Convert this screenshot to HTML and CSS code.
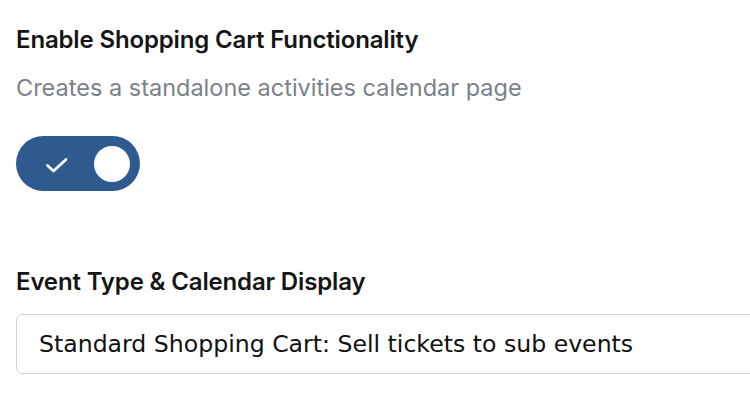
FILE: index.html
```html
<!DOCTYPE html>
<html>
<head>
<meta charset="utf-8">
<link rel="stylesheet" href="styles.css">
</head>
<body>
<div class="page">
  <section class="field">
    <h2 class="label">Enable Shopping Cart Functionality</h2>
    <p class="help">Creates a standalone activities calendar page</p>
    <div class="toggle" role="switch" aria-checked="true">
      <svg class="check" width="24" height="18" viewBox="0 0 24 18"><path d="M2.5 9.5 L8.5 15 L21 3.5" fill="none" stroke="#fff" stroke-width="2.8" stroke-linecap="round" stroke-linejoin="round"/></svg>
      <span class="knob"></span>
    </div>
  </section>
  <section class="field second">
    <h2 class="label">Event Type &amp; Calendar Display</h2>
    <div class="select">Standard Shopping Cart: Sell tickets to sub events</div>
  </section>
</div>
</body>
</html>
```
FILE: styles.css
```css
html, body { margin: 0; padding: 0; background: #fff; overflow: hidden; }
.page { padding: 25px 0 0 16px; font-family: Inter, "Noto Sans", sans-serif; }
.label { margin: 0; font-size: 24px; font-weight: 600; color: #151515; line-height: 29px; letter-spacing: -0.15px; }
.help { margin: 20px 0 0; font-size: 23.5px; color: #7b8188; line-height: 28px; }
.toggle { margin-top: 34px; width: 124px; height: 55px; border-radius: 28px; background: #2f5a8f; display: flex; align-items: center; box-sizing: border-box; padding: 0 10px 0 29px; }
.check { display: block; margin-top: 2px; }
.knob { margin-left: auto; width: 36px; height: 36px; border-radius: 50%; background: #fff; }
.second { margin-top: 76px; }
.select { margin-top: 18px; width: 760px; height: 60px; box-sizing: border-box; border: 1px solid #cfd5dc; border-radius: 6px; display: flex; align-items: center; padding: 0 0 0 22px; font-family: "DejaVu Sans", sans-serif; font-size: 23.6px; color: #111; }
```
